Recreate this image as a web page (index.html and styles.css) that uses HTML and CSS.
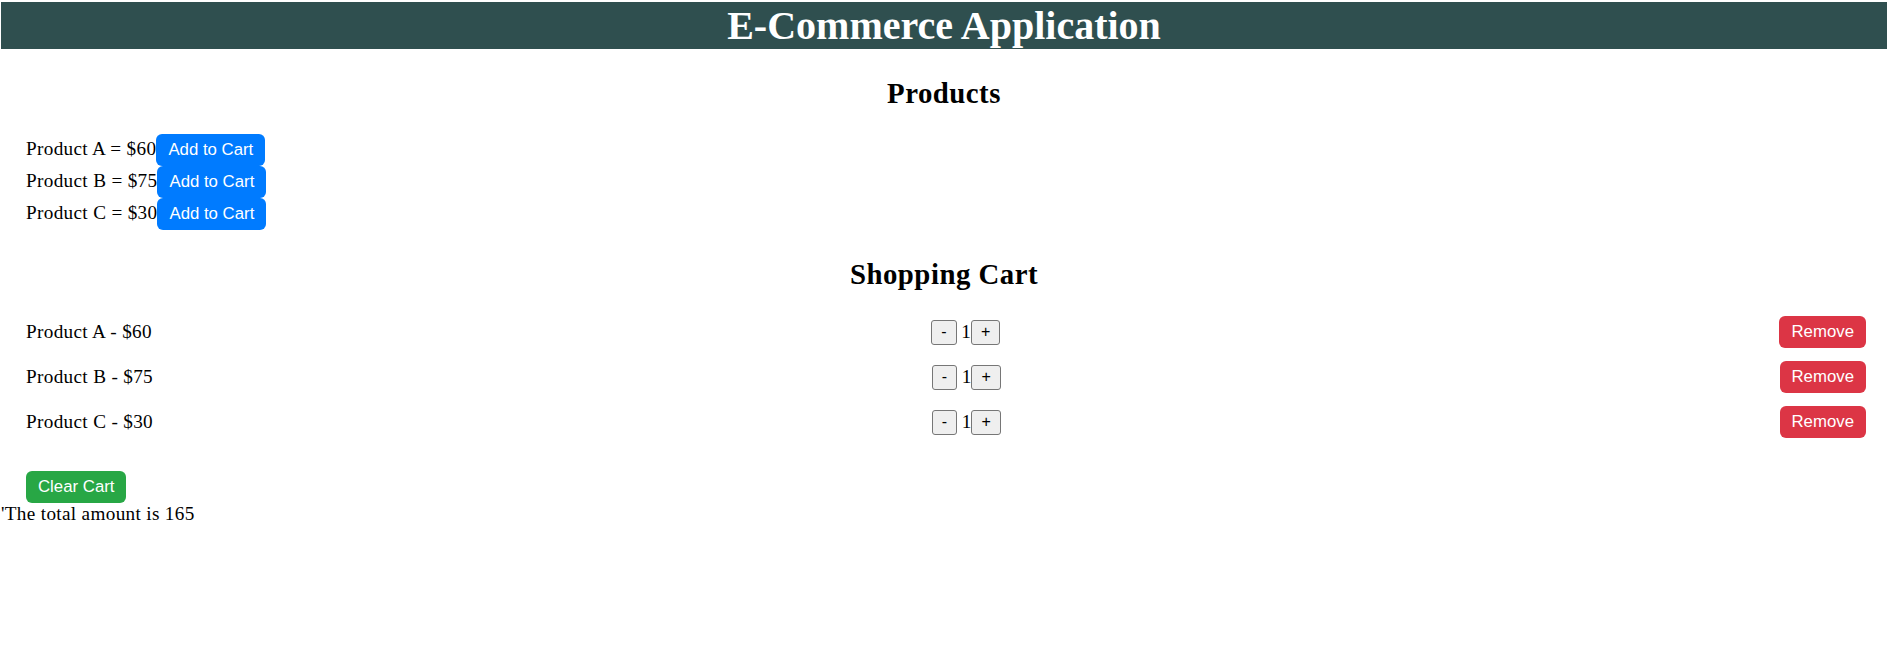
FILE: index.html
```html
<!DOCTYPE html>
<html lang="en">
<head>
<meta charset="utf-8">
<title>E-Commerce Application</title>
<link rel="stylesheet" href="styles.css">
</head>
<body>
<h1 class="app-title">E-Commerce Application</h1>

<section class="products">
  <h2 class="section-title products-title">Products</h2>
  <div class="product-list">
    <div class="product-item"><span class="product-label">Product A = $60</span><button class="btn btn-blue">Add to Cart</button></div>
    <div class="product-item"><span class="product-label">Product B = $75</span><button class="btn btn-blue">Add to Cart</button></div>
    <div class="product-item"><span class="product-label">Product C = $30</span><button class="btn btn-blue">Add to Cart</button></div>
  </div>
</section>

<section class="cart">
  <h2 class="section-title cart-title">Shopping Cart</h2>
  <div class="cart-list">
    <div class="cart-row">
      <span class="cart-label">Product A - $60</span>
      <span class="qty"><button class="qty-btn">-</button> 1<button class="qty-btn">+</button></span>
      <button class="btn btn-red">Remove</button>
    </div>
    <div class="cart-row">
      <span class="cart-label">Product B - $75</span>
      <span class="qty"><button class="qty-btn">-</button> 1<button class="qty-btn">+</button></span>
      <button class="btn btn-red">Remove</button>
    </div>
    <div class="cart-row">
      <span class="cart-label">Product C - $30</span>
      <span class="qty"><button class="qty-btn">-</button> 1<button class="qty-btn">+</button></span>
      <button class="btn btn-red">Remove</button>
    </div>
  </div>
  <div class="cart-actions">
    <button class="btn btn-green">Clear Cart</button>
  </div>
  <div class="total">'The total amount is 165</div>
</section>
</body>
</html>
```

FILE: styles.css
```css
html, body {
  margin: 0;
  padding: 0;
  background: #ffffff;
}

body {
  padding: 2px 0 0 1px;
  font-family: "Liberation Serif", "Times New Roman", serif;
  font-size: 19.2px;
  color: #000000;
}

.app-title {
  margin: 0;
  height: 47px;
  line-height: 47px;
  background: #2f4f4f;
  color: #ffffff;
  font-size: 40px;
  font-weight: bold;
  text-align: center;
}

.section-title {
  margin: 0;
  font-size: 28.8px;
  font-weight: bold;
  line-height: 33px;
  letter-spacing: 0.5px;
  text-align: center;
}

.products-title {
  margin-top: 28px;
  margin-bottom: 24px;
}

.product-list {
  padding-left: 25px;
}

.product-item {
  display: flex;
  align-items: baseline;
  height: 32px;
}

.product-label,
.cart-label,
.total {
  letter-spacing: 0.33px;
}

.btn {
  font-family: "Liberation Sans", Arial, sans-serif;
  font-size: 16.8px;
  line-height: 20px;
  padding: 6px 12px;
  border: none;
  border-radius: 6px;
  color: #ffffff;
  cursor: pointer;
}

.btn-blue { background: #007bff; }
.btn-red { background: #dc3545; }
.btn-green { background: #28a745; }

.cart-title {
  margin-top: 28px;
  margin-bottom: 25px;
}

.cart-list {
  padding: 0 21px 0 25px;
}

.cart-row {
  display: flex;
  justify-content: space-between;
  align-items: center;
  height: 32px;
  margin-bottom: 13px;
}

.cart-row:last-child {
  margin-bottom: 0;
}

.qty {
  display: flex;
  align-items: center;
  white-space: pre;
}

.qty-btn {
  font-family: "Liberation Sans", Arial, sans-serif;
  font-size: 16px;
  line-height: 18px;
  height: 25px;
  padding: 0 9px;
  border: 1px solid #767676;
  border-radius: 3px;
  background: #efefef;
  color: #000000;
}

.cart-actions {
  margin-top: 33px;
  padding-left: 25px;
}

.cart-actions .btn {
  display: block;
}

.total {
  line-height: 22px;
}
```
